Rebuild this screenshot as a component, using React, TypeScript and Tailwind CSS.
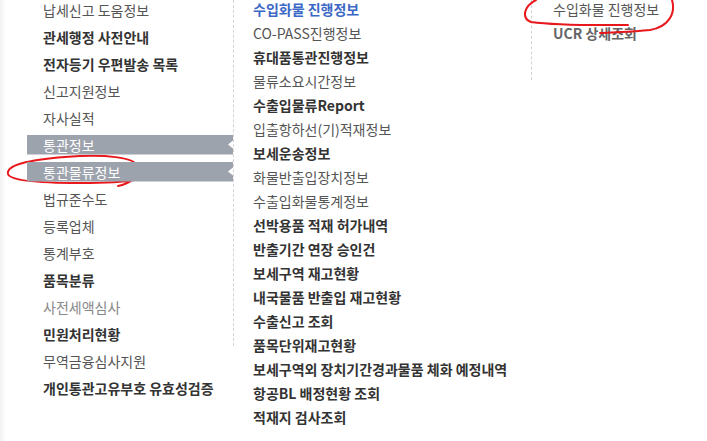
import React from 'react'
import clsx from 'clsx'

type Item = { name: string, bold?: boolean, active?: boolean, light?: boolean }

const leftMenu: Item[] = [
    { name: '납세신고 도움정보' },
    { name: '관세행정 사전안내', bold: true },
    { name: '전자등기 우편발송 목록', bold: true },
    { name: '신고지원정보' },
    { name: '자사실적' },
    { name: '통관정보', active: true },
    { name: '통관물류정보', active: true },
    { name: '법규준수도' },
    { name: '등록업체' },
    { name: '통계부호' },
    { name: '품목분류', bold: true },
    { name: '사전세액심사', light: true },
    { name: '민원처리현황', bold: true },
    { name: '무역금융심사지원' },
    { name: '개인통관고유부호 유효성검증', bold: true },
]

const midMenu: Item[] = [
    { name: '수입화물 진행정보', active: true },
    { name: 'CO-PASS진행정보' },
    { name: '휴대품통관진행정보', bold: true },
    { name: '물류소요시간정보' },
    { name: '수출입물류Report', bold: true },
    { name: '입출항하선(기)적재정보' },
    { name: '보세운송정보', bold: true },
    { name: '화물반출입장치정보' },
    { name: '수출입화물통계정보' },
    { name: '선박용품 적재 허가내역', bold: true },
    { name: '반출기간 연장 승인건', bold: true },
    { name: '보세구역 재고현황', bold: true },
    { name: '내국물품 반출입 재고현황', bold: true },
    { name: '수출신고 조회', bold: true },
    { name: '품목단위재고현황', bold: true },
    { name: '보세구역외 장치기간경과물품 체화 예정내역', bold: true },
    { name: '항공BL 배정현황 조회', bold: true },
    { name: '적재지 검사조회', bold: true },
]

const rightMenu: Item[] = [
    { name: '수입화물 진행정보' },
    { name: 'UCR 상세조회', light: true },
]

const LeftMenu = () => {
    return (
        <ul className="w-[227px] pl-[21px] -mt-[4px] shrink-0">
            {
                leftMenu.map((item, idx) => (
                    <li key={idx} className="h-[27px] flex items-center">
                        {
                            item.active ? (
                                <a className="relative z-10 -mr-px flex h-[20px] w-full items-center bg-[#9da3ad] pl-[16px] text-white [clip-path:polygon(0_0,100%_0,100%_30%,calc(100%-5px)_50%,100%_70%,100%_100%,0_100%)]">
                                    {item.name}
                                </a>
                            ) : (
                                <a className={clsx("pl-[16px] whitespace-nowrap", {
                                    "font-bold text-[#333]": item.bold,
                                    "text-[#888]": item.light,
                                    "text-[#555]": !item.bold && !item.light,
                                })}>
                                    {item.name}
                                </a>
                            )
                        }
                    </li>
                ))
            }
        </ul>
    )
}

const SubMenu = ({ items, width, pl }: { items: Item[], width: string, pl: string }) => {
    return (
        <ul className={clsx(width, pl, "-mt-[3px] shrink-0")}>
            {
                items.map((item, idx) => (
                    <li key={idx} className="h-[24px] flex items-center whitespace-nowrap">
                        <a className={clsx({
                            "font-bold text-[#3b68c6]": item.active,
                            "font-bold text-[#333]": item.bold && !item.active,
                            "font-semibold text-[#666]": item.light,
                            "text-[#555]": !item.bold && !item.active && !item.light,
                        })}>
                            {item.name}
                        </a>
                    </li>
                ))
            }
        </ul>
    )
}

export default function App() {
    return (
        <div className="relative w-[707px] h-[441px] overflow-hidden bg-white text-[14px] leading-none [font-family:'Noto_Sans_CJK_KR','Noto_Sans',sans-serif]">
            <div className="flex items-start">
                <div className="w-[6px] h-[441px] shrink-0 bg-gradient-to-r from-[#f1f1f1] to-white"></div>
                <LeftMenu />
                <div className="w-px h-[346px] shrink-0 border-l border-dashed border-[#d4d4d4]"></div>
                <SubMenu items={midMenu} width="w-[297px]" pl="pl-[19px]" />
                <div className="w-px h-[80px] shrink-0 border-l border-dashed border-[#d4d4d4]"></div>
                <SubMenu items={rightMenu} width="w-[170px]" pl="pl-[21px]" />
            </div>

            {/* hand-drawn red marks */}
            <svg className="absolute inset-0 pointer-events-none" width="707" height="441" viewBox="0 0 707 441" fill="none" stroke="#e8171c" strokeWidth="2" strokeLinecap="round">
                <path d="M118 186 C128 184 139 178 138 167 C136 157 105 154 65 157 C28 160 6 165 8 174 C10 181 40 183 80 183 C105 183 125 182 134 180" />
                <path d="M536 0 C524 6 521 18 531 22 C560 26 600 25 628 25" />
                <path d="M672 0 C676 14 668 27 650 30 C632 32 614 32 600 33" />
            </svg>
        </div>
    )
}
